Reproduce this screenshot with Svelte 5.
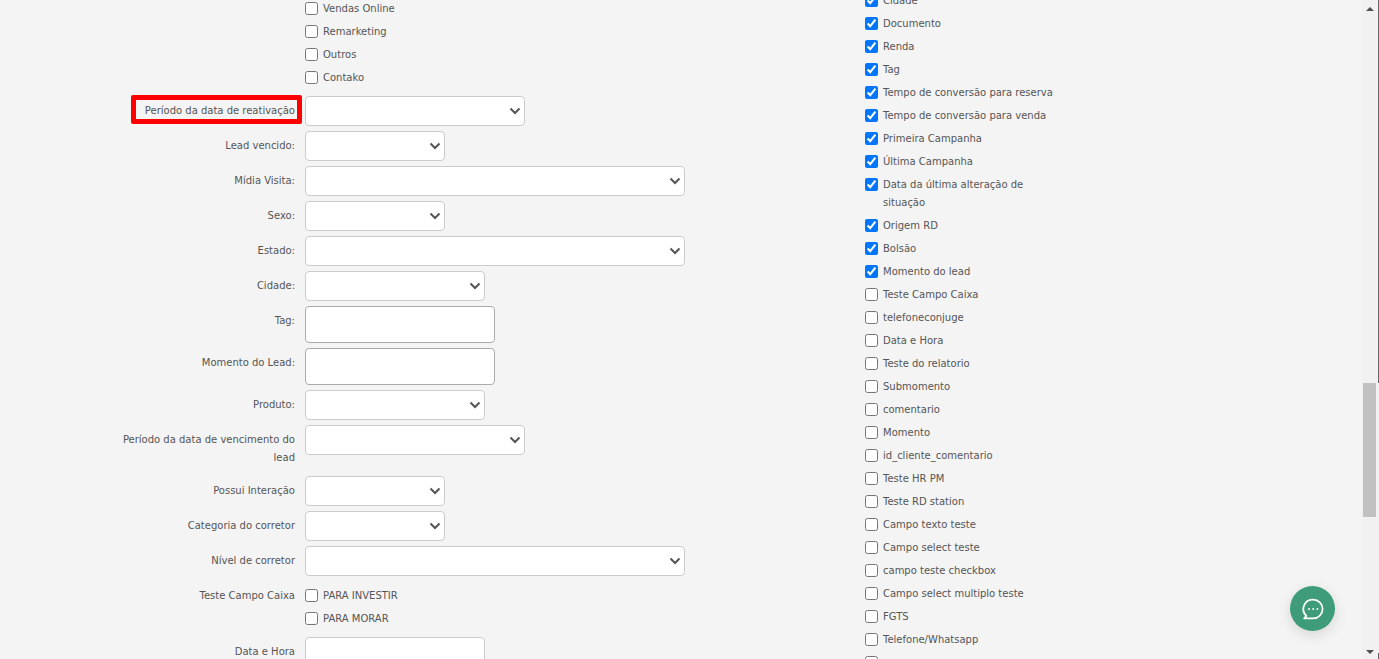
<script>
	const channels = ['Vendas Online', 'Remarketing', 'Outros', 'Contako'];

	const topFields = [
		{ label: 'Lead vencido:', size: 'sm' },
		{ label: 'Mídia Visita:', size: 'xl' },
		{ label: 'Sexo:', size: 'sm' },
		{ label: 'Estado:', size: 'xl' },
		{ label: 'Cidade:', size: 'md' }
	];

	const bottomFields = [
		{ label: 'Possui Interação', size: 'sm' },
		{ label: 'Categoria do corretor', size: 'sm' },
		{ label: 'Nível de corretor', size: 'xl' }
	];

	const columns = [
		{ name: 'Cidade', on: true },
		{ name: 'Documento', on: true },
		{ name: 'Renda', on: true },
		{ name: 'Tag', on: true },
		{ name: 'Tempo de conversão para reserva', on: true },
		{ name: 'Tempo de conversão para venda', on: true },
		{ name: 'Primeira Campanha', on: true },
		{ name: 'Última Campanha', on: true },
		{ name: 'Data da última alteração de situação', on: true },
		{ name: 'Origem RD', on: true },
		{ name: 'Bolsão', on: true },
		{ name: 'Momento do lead', on: true },
		{ name: 'Teste Campo Caixa', on: false },
		{ name: 'telefoneconjuge', on: false },
		{ name: 'Data e Hora', on: false },
		{ name: 'Teste do relatorio', on: false },
		{ name: 'Submomento', on: false },
		{ name: 'comentario', on: false },
		{ name: 'Momento', on: false },
		{ name: 'id_cliente_comentario', on: false },
		{ name: 'Teste HR PM', on: false },
		{ name: 'Teste RD station', on: false },
		{ name: 'Campo texto teste', on: false },
		{ name: 'Campo select teste', on: false },
		{ name: 'campo teste checkbox', on: false },
		{ name: 'Campo select multiplo teste', on: false },
		{ name: 'FGTS', on: false },
		{ name: 'Telefone/Whatsapp', on: false },
		{ name: '', on: false }
	];
</script>

<div class="page">
	<main class="content">
		<form class="filters">
			<div class="row channels">
				<span class="label"></span>
				<div class="checks">
					{#each channels as c}
						<label class="check"><input type="checkbox" /><span>{c}</span></label>
					{/each}
				</div>
			</div>

			<div class="row">
				<span class="label">Período da data de reativação</span>
				<select class="lg"></select>
				<span class="highlight"></span>
			</div>

			{#each topFields as f}
				<div class="row">
					<span class="label">{f.label}</span>
					<select class={f.size}></select>
				</div>
			{/each}

			<div class="row">
				<span class="label">Tag:</span>
				<textarea></textarea>
			</div>
			<div class="row">
				<span class="label">Momento do Lead:</span>
				<textarea></textarea>
			</div>
			<div class="row">
				<span class="label">Produto:</span>
				<select class="md"></select>
			</div>
			<div class="row">
				<span class="label">Período da data de vencimento do lead</span>
				<select class="lg"></select>
			</div>

			{#each bottomFields as f}
				<div class="row">
					<span class="label">{f.label}</span>
					<select class={f.size}></select>
				</div>
			{/each}

			<div class="row group">
				<span class="label tight">Teste Campo Caixa</span>
				<div class="checks">
					<label class="check"><input type="checkbox" /><span>PARA INVESTIR</span></label>
					<label class="check"><input type="checkbox" /><span>PARA MORAR</span></label>
				</div>
			</div>

			<div class="row">
				<span class="label">Data e Hora</span>
				<input class="text" type="text" />
			</div>
		</form>

		<div class="columns">
			{#each columns as c}
				<label class="check"><input type="checkbox" checked={c.on} /><span>{c.name}</span></label>
			{/each}
		</div>
	</main>

	<div class="scrollbar">
		<div class="arrow up"></div>
		<div class="thumb"></div>
		<div class="arrow down"></div>
	</div>

	<button class="chat" type="button" aria-label="Chat">
		<svg width="24" height="24" viewBox="0 0 24 24" fill="none" stroke="#fff" stroke-width="1.7">
			<path d="M12.2 2.6a9.4 9.4 0 1 1 0 18.8H3.2l2.2-2.5a9.4 9.4 0 0 1 6.8-16.3z" stroke-linejoin="round" />
			<circle cx="8" cy="12" r="1" fill="#fff" stroke="none" />
			<circle cx="12.2" cy="12" r="1" fill="#fff" stroke="none" />
			<circle cx="16.4" cy="12" r="1" fill="#fff" stroke="none" />
		</svg>
	</button>
</div>

<style>
	:global(body) {
		background: #f4f4f4;
		color: #555;
		font-family: 'DejaVu Sans', Verdana, sans-serif;
		font-size: 10px;
		line-height: 18px;
	}
	.page {
		display: flex;
		height: 659px;
		overflow: hidden;
	}
	.content {
		flex: 1;
		display: flex;
		align-items: flex-start;
		margin-top: -8px;
	}
	.filters {
		width: 865px;
		padding-top: 8px;
	}
	.row {
		position: relative;
		display: flex;
		gap: 10px;
		margin-bottom: 5px;
	}
	.row.channels {
		margin-bottom: 9px;
	}
	.row.group {
		margin-top: 11px;
		margin-bottom: 9px;
	}
	.label {
		width: 295px;
		padding: 6px 0 4px 100px;
		box-sizing: border-box;
		flex-shrink: 0;
		text-align: right;
	}
	.label.tight {
		padding: 0 0 0 100px;
	}
	.checks {
		display: flex;
		flex-direction: column;
		gap: 5px;
	}
	.check {
		display: flex;
		gap: 5px;
	}
	.check input {
		flex-shrink: 0;
		margin: 2px 0 0;
		width: 13px;
		height: 13px;
	}
	select,
	textarea,
	.text {
		display: block;
		box-sizing: border-box;
		height: 30px;
		margin: 0;
		padding: 0 8px;
		background-color: #fff;
		border: 1px solid #ccc;
		border-radius: 4px;
		outline: none;
		resize: none;
	}
	select {
		appearance: none;
		background-image: url("data:image/svg+xml,%3Csvg xmlns='http://www.w3.org/2000/svg' width='12' height='8' viewBox='0 0 12 8'%3E%3Cpath d='M1.5 1.5 6 6l4.5-4.5' fill='none' stroke='%23555' stroke-width='2'/%3E%3C/svg%3E");
		background-repeat: no-repeat;
		background-position: right 3px center;
	}
	select.sm {
		width: 140px;
	}
	select.md,
	.text {
		width: 180px;
	}
	select.lg {
		width: 220px;
	}
	select.xl {
		width: 380px;
	}
	textarea {
		width: 190px;
		height: 37px;
		border-color: #aaa;
	}
	.highlight {
		position: absolute;
		left: 131px;
		top: -1px;
		width: 171px;
		height: 29px;
		box-sizing: border-box;
		border: 5px solid #f00;
		border-radius: 2px;
	}
	.columns {
		width: 177px;
		display: flex;
		flex-direction: column;
		gap: 5px;
		flex-shrink: 0;
	}
	.columns .check {
		width: 195px;
	}
	.scrollbar {
		position: relative;
		width: 17px;
		flex-shrink: 0;
		background: #f1f1f1;
	}
	/* dark edge the capture shows on the last pixel column */
	.scrollbar::before,
	.scrollbar::after {
		content: '';
		position: absolute;
		right: 0;
		width: 1px;
		background: #666;
	}
	.scrollbar::before {
		top: 0;
		height: 383px;
	}
	.scrollbar::after {
		bottom: 0;
		height: 6px;
	}
	.thumb {
		width: 13px;
		height: 134px;
		margin: 383px 0 0 1px;
		background: #c1c1c1;
	}
	.arrow {
		position: absolute;
		left: 4px;
		border-style: solid;
		border-color: transparent;
	}
	.arrow.up {
		top: 7px;
		border-width: 0 4px 4px;
		border-bottom-color: #505050;
	}
	.arrow.down {
		bottom: 5px;
		border-width: 4px 4px 0;
		border-top-color: #505050;
	}
	.chat {
		position: fixed;
		left: 1290px;
		top: 586px;
		width: 45px;
		height: 45px;
		display: flex;
		align-items: center;
		justify-content: center;
		padding: 0;
		border: none;
		border-radius: 50%;
		background: #3f9c78;
		box-shadow: 0 4px 14px rgba(0, 0, 0, 0.12);
	}
</style>
